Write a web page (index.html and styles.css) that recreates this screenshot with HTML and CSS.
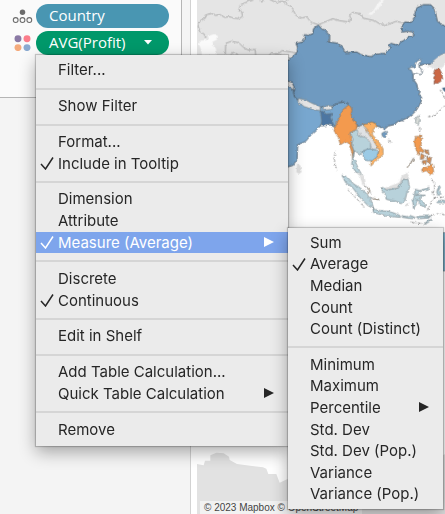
FILE: index.html
```
<!DOCTYPE html>
<html lang="en">
<head>
<meta charset="utf-8">
<title>Profit by Country</title>
<link rel="stylesheet" href="styles.css">
</head>
<body>
<div class="workspace">
  <aside class="sidebar">
    <section class="marks">
      <div class="mark">
        <svg class="mark-icon" viewBox="0 0 20 14" aria-hidden="true">
          <circle cx="10" cy="3" r="2.6" fill="#6b6b6b"/>
          <g fill="none" stroke="#6b6b6b" stroke-width="1"><circle cx="3.500" cy="10.500" r="2.300"/><circle cx="10" cy="10.500" r="2.300"/><circle cx="16.500" cy="10.500" r="2.300"/></g>
        </svg>
        <button class="pill pill-dimension" type="button">Country</button>
      </div>
      <div class="mark">
        <svg class="mark-icon" viewBox="0 0 20 16" aria-hidden="true">
          <circle cx="5.700" cy="3.500" r="3.300" fill="#8a79a4"/><circle cx="14.300" cy="3.500" r="3.300" fill="#fb7d8b"/>
          <circle cx="5.700" cy="12" r="3.300" fill="#f4aa7c"/><circle cx="14.300" cy="12" r="3.300" fill="#8aaad0"/>
        </svg>
        <div class="pill-anchor">
          <button class="pill pill-measure" type="button" aria-haspopup="menu" aria-expanded="true">AVG(Profit)
            <svg class="caret" viewBox="0 0 8 5" aria-hidden="true"><path d="M0 0H8L4 4.500Z"/></svg>
          </button>
          <ul class="menu" role="menu">
            <li><button type="button" role="menuitem">Filter...</button></li>
            <li class="rule" role="separator"></li>
            <li><button type="button" role="menuitem">Show Filter</button></li>
            <li class="rule" role="separator"></li>
            <li><button type="button" role="menuitem">Format...</button></li>
            <li><button type="button" role="menuitemcheckbox" aria-checked="true"><svg class="check" viewBox="0 0 28 28"><path d="M2 16 11 26 26 3"/></svg>Include in Tooltip</button></li>
            <li class="rule" role="separator"></li>
            <li><button type="button" role="menuitem">Dimension</button></li>
            <li><button type="button" role="menuitem">Attribute</button></li>
            <li class="parent">
              <button class="active" type="button" role="menuitem" aria-haspopup="menu" aria-expanded="true"><svg class="check" viewBox="0 0 28 28"><path d="M2 16 11 26 26 3"/></svg>Measure (Average)<svg class="arrow" viewBox="0 0 10 10"><path d="M0 0 10 5 0 10Z"/></svg></button>
              <ul class="menu submenu" role="menu">
                <li><button type="button" role="menuitem">Sum</button></li>
                <li><button type="button" role="menuitemradio" aria-checked="true"><svg class="check" viewBox="0 0 28 28"><path d="M2 16 11 26 26 3"/></svg>Average</button></li>
                <li><button type="button" role="menuitem">Median</button></li>
                <li><button type="button" role="menuitem">Count</button></li>
                <li><button type="button" role="menuitem">Count (Distinct)</button></li>
                <li class="rule" role="separator"></li>
                <li><button type="button" role="menuitem">Minimum</button></li>
                <li><button type="button" role="menuitem">Maximum</button></li>
                <li><button type="button" role="menuitem">Percentile<svg class="arrow" viewBox="0 0 10 10"><path d="M0 0 10 5 0 10Z"/></svg></button></li>
                <li><button type="button" role="menuitem">Std. Dev</button></li>
                <li><button type="button" role="menuitem">Std. Dev (Pop.)</button></li>
                <li><button type="button" role="menuitem">Variance</button></li>
                <li><button type="button" role="menuitem">Variance (Pop.)</button></li>
              </ul>
            </li>
            <li class="rule" role="separator"></li>
            <li><button type="button" role="menuitem">Discrete</button></li>
            <li><button type="button" role="menuitemcheckbox" aria-checked="true"><svg class="check" viewBox="0 0 28 28"><path d="M2 16 11 26 26 3"/></svg>Continuous</button></li>
            <li class="rule" role="separator"></li>
            <li><button type="button" role="menuitem">Edit in Shelf</button></li>
            <li class="rule" role="separator"></li>
            <li><button type="button" role="menuitem">Add Table Calculation...</button></li>
            <li><button type="button" role="menuitem">Quick Table Calculation<svg class="arrow" viewBox="0 0 10 10"><path d="M0 0 10 5 0 10Z"/></svg></button></li>
            <li class="rule" role="separator"></li>
            <li><button type="button" role="menuitem">Remove</button></li>
          </ul>
        </div>
      </div>
    </section>
  </aside>
  <main class="map">
    <svg class="map-art" viewBox="0 0 744 1542" preserveAspectRatio="xMinYMin slice" aria-hidden="true">
      <!-- roughens the straight segments into coastlines -->
      <filter id="coast" filterUnits="userSpaceOnUse" x="-30" y="-30" width="900" height="900" color-interpolation-filters="sRGB">
        <feTurbulence type="fractalNoise" baseFrequency="0.1" numOctaves="2" seed="4" result="noise"/>
        <feDisplacementMap in="SourceGraphic" in2="noise" scale="9" xChannelSelector="R" yChannelSelector="G"/>
      </filter>
      <g filter="url(#coast)">
      <!-- northern land and its borders -->
      <g transform="translate(-21 0)">
        <path fill="#e5e5e5" d="M-10 -20H790V150L750 165 730 182 722 190 735 205 700 196 400 330 -10 330Z"/>
        <path fill="#fafafa" d="M60 106 72 102 84 108 82 118 66 126 68 136 78 146 80 165H36L32 145 26 132 32 122 50 120Z"/>
        <path fill="#f5f5f5" d="M532 42 550 32 562 12 572 0H583L574 16 556 34 545 45Z"/>
        <g fill="none" stroke="#acacac" stroke-width="3">
          <path d="M48 112 40 100 30 95 24 78 30 62 45 55 50 44 64 40 76 46 90 44 104 52 118 50 130 54 148 56 158 48 154 34 146 32 152 14 166 8 190 0M212 3 222 0M240 0 262 8 272 4 285 6 292 0M285 10 302 18 318 46 336 54 350 50 362 66 385 74 400 68 428 56 448 62 478 66 482 54 478 46 488 37 514 42 518 54 536 58 554 62 570 72 592 74 618 64 646 70 640 84"/>
          <path d="M106 165 107 130 124 124 146 128 160 142 174 150 195 148 197 165M122 165 130 156 144 164M238 165 244 158 264 162 276 152 304 156 320 160"/>
        </g>
      </g>
      <!-- India -->
      <path fill="#78a7cf" stroke="#586f82" stroke-width="3" d="M254 240 290 272 334 315 369 322 384 318 409 318 424 308 445 306 459 315 440 360 420 378 400 375 372 374 368 380 344 402 326 424 302 434 300 478 288 496 254 506Z"/>
      <!-- China -->
      <g transform="translate(-21 0)">
        <path fill="#6f9ac0" stroke="#52626f" stroke-width="3" d="M280 184 302 175 320 158 323 144 318 130 340 126 344 103 354 106 368 102 371 85 385 75 396 88 404 89 419 107 419 122 415 126 440 129 458 142 466 158 500 156 514 164 542 170 560 162 585 160 600 146 598 134 603 130 625 136 632 126 648 118 658 108 672 107 669 96 655 94 636 96 636 78 644 66 665 67 676 50 674 38 680 24 700 14 722 14 734 26 742 64 756 74 785 84V152L750 166 743 174 730 182 724 192 697 194 684 198 693 206 690 214 697 218 691 224 679 220 669 223 669 236 680 252 683 266 690 276 686 284 695 292 693 305 685 320 678 332 666 344 652 353 635 362 622 365 615 373 595 378 583 388 575 382 560 378 557 370 543 366 533 372 517 375 500 380 490 360 480 345 478 316 465 306 445 308 430 318 405 320 390 322 355 318 325 302 313 290 310 272 312 260 305 246 280 240Z"/>
        <path fill="#fff" stroke="#52626f" stroke-width="2" d="M654 207 662 202 672 202 680 184 690 179 694 183 686 195 688 204 698 210 697 218 690 224 678 220 668 222 664 210Z"/>
        <path fill="#e2e2e2" d="M785 150 750 166 730 182 722 194 735 205 757 203 770 190Z"/>
        <path fill="#cb6745" stroke="#755044" stroke-width="2" d="M736 209 748 206 755 220 758 238 750 246 738 250 732 252 735 234 730 222Z"/>
        <path fill="#4f718f" d="M775 260 756 264 762 274 775 276Z"/>
      </g>
      <!-- South and Southeast Asia -->
      <g transform="translate(264 270)" stroke="#6e7b82" stroke-width="2" stroke-linejoin="round">
        <path fill="#e4e4e4" d="M40 25 62 30 82 40 105 49 106 62 86 59 58 50 38 36ZM117 48 140 48 142 58 120 60 113 56Z"/>
        <path fill="#4c76a2" d="M106 62 118 66 122 72 142 70 136 82 146 104 150 112 142 109 134 100 124 107 108 108 110 92Z"/>
        <path fill="#f39a4e" stroke="#94704d" d="M192 44 201 58 198 74 205 88 216 106 214 118 194 128 200 150 198 164 206 182 204 208 201 188 190 158 180 156 166 164 160 142 147 122 154 102 164 82 172 60Z"/>
        <path fill="#b8d2db" d="M196 128 216 120 224 140 246 138 258 156 256 176 232 184 228 194 208 182 206 204 220 236 229 252 212 246 200 224 206 182 200 162 204 148Z"/>
        <path fill="#e0e2e4" stroke="#969b9e" d="M218 116 229 106 238 112 246 120 250 134 270 152 278 176 262 178 256 160 246 144 228 138Z"/>
        <path fill="#fbb164" stroke="#9c7a51" d="M232 103 246 102 260 96 272 101 276 110 264 118 262 134 280 154 294 176 294 194 276 210 258 228 258 212 276 202 282 180 266 152 252 130 244 114Z"/>
        <path fill="#9bcae5" d="M232 184 250 176 272 180 280 184 276 200 262 212 244 212 236 202Z"/>
        <path fill="#6f9ac0" d="M290 130 300 124 308 126 302 140 292 142Z"/>
        <path fill="#d9ddda" d="M402 76 405 88 399 106 391 98 392 84Z"/>
        <path fill="#f39a4e" stroke="#94704d" d="M392 140 410 138 409 160 404 174 416 180 414 188 404 182 401 196 390 170 388 154ZM424 232 442 222 446 246 438 255 424 242 412 246 410 238Z"/>
        <path fill="#d98f54" stroke="#787066" d="M408 190 418 196 416 206 406 208ZM418 182 430 180 432 192 422 190ZM425 198 439 204 435 224 428 216ZM412 212 424 211 422 224 414 222Z"/>
        <path fill="#dfdfdf" stroke="none" d="M220 246 238 258 244 290 232 282ZM298 294 342 278 350 258 366 248 374 262 364 272 358 288 332 298 300 300ZM37 222 46 226 50 246 42 252 34 246Z"/>
        <path fill="#b8d2db" d="M171 256 190 264 206 282 226 294 244 310 258 330 266 356 248 346 228 326 202 292 182 278Z"/>
        <path fill="#b8d2db" d="M292 292 305 300 340 294 354 268 369 268 374 294 366 306 360 332 348 341 332 334 304 328 300 312 291 302Z"/>
        <path fill="#b8d2db" d="M264 356 284 362 314 364 344 376 346 382 304 378 266 368Z"/>
        <path fill="#b8d2db" d="M390 298 404 302 432 292 430 300 400 306 392 316 410 314 418 316 402 324 420 342 421 352 408 346 396 328 392 344 386 356 383 334 388 318ZM462 286 466 292 460 302 468 310 460 318 455 306Z"/>
        <path fill="#b8d2db" d="M350 377 366 380 374 376 390 382 382 386 352 382ZM394 380 416 378 438 378 430 384 400 386ZM428 392 440 388 430 397 418 402ZM456 334 470 330 490 334 490 338 456 338Z"/>
        <g fill="none" stroke="#656565" stroke-width="3" stroke-dasharray="6 4 3 6">
          <path d="M151 184 147 202 150 222 156 240M190 300 206 318 224 334 238 352M240 288 256 306 258 324 284 330M386 204 376 220 366 234M430 80 448 78 460 66 478 48M466 0 474 14 478 24M440 268 450 284 444 310 450 326M436 376 456 372 478 374M404 112 406 132M310 150 320 160M380 398 410 400M364 346 372 338M428 360 432 350 446 326 478 320"/>
        </g>
        <path fill="none" stroke="#7c6e5d" stroke-width="3" d="M385 207 378 218 366 233M262 326 280 328M246 292 254 300 248 312"/>
      </g>
      </g>
      <!-- Australia and Antarctica -->
      <path fill="#7caec6" stroke="#7b8890" stroke-width="2" d="M736 698H750V813H736Z"/>
      <path fill="#e2e2e2" d="M0 1392 20 1396 24 1382 40 1382 40 1366 58 1358 80 1360 96 1370 98 1380 120 1392 198 1402 208 1406 214 1422 238 1422 248 1448 270 1438 400 1430 736 1430 738 1365 750 1360V1542H0Z"/>
    </svg>
    <p class="credit">© 2023 Mapbox © OpenStreetMap</p>
  </main>
</div>
</body>
</html>
```
FILE: styles.css
```
* { box-sizing: border-box; }

body {
  margin: 0;
  font-family: Inter, "Liberation Sans", sans-serif;
  color: #262626;
}

button {
  font: inherit;
  color: inherit;
  border: 0;
  background: none;
  text-align: left;
}

ul, p { margin: 0; padding: 0; list-style: none; }

.workspace {
  display: flex;
  min-height: 100vh;
  overflow: hidden;
  background: #f4f4f4;
}

.sidebar {
  flex: 0 0 191px;
  padding-right: 8px;
  border-right: 1px solid #d2d2d2;
}

.marks {
  display: flex;
  flex-direction: column;
  gap: 3px;
  height: 98px;
  padding: 4px 12px 0;
  background: #fafafa;
  border: solid #b5b5b5;
  border-width: 0 1px 1px 0;
}

.mark {
  display: flex;
  align-items: center;
  gap: 3px;
}

.mark-icon { flex: 0 0 21px; width: 21px; }

.pill-anchor { position: relative; }

.pill {
  display: flex;
  align-items: center;
  justify-content: space-between;
  width: 133px;
  height: 24px;
  padding: 0 17px 2px 13px;
  border-radius: 12px;
  color: #fff;
  font-family: "Open Sans", sans-serif;
  font-size: 15px;
}

.pill-dimension { background: #4996b2; }
.pill-measure { background: #00986a; }
.caret { width: 8px; fill: #fff; }

.menu {
  position: absolute;
  z-index: 2;
  top: 100%;
  left: 0;
  display: flex;
  flex-direction: column;
  width: 252px;
  min-height: 391px;
  padding: 4px 0 6px;
  background: #ebebeb;
  box-shadow: 0 0 1px 1px #0003, 0 6px 16px #0005;
  font-size: 15px;
  white-space: nowrap;
}

.menu > li { display: flex; flex: 1 0 21px; }

.menu > .rule {
  flex: 0 0 14px;
  padding: 7px 0 5px;
  background: #d5d5d5 content-box;
}

.menu button {
  position: relative;
  display: flex;
  flex: 1;
  align-items: center;
  justify-content: space-between;
  padding: 0 14px 0 22px;
}

.menu .active { background: #7ea5ec; color: #fff; }

.check {
  position: absolute;
  left: 4px;
  width: 14px;
  fill: none;
  stroke: currentColor;
  stroke-width: 3;
}

.arrow { width: 10px; fill: currentColor; }

.parent { position: relative; }

.menu.submenu {
  top: -4px;
  left: 100%;
  width: 155px;
  min-height: 281px;
  padding: 4px 0;
}

.map {
  position: relative;
  flex: 1;
  border-left: 6px solid #fff;
  background: #fff;
}

.map-art {
  position: absolute;
  width: 100%;
  height: 100%;
}

.credit {
  position: absolute;
  bottom: 0;
  left: 3px;
  padding: 0 4px;
  background: #f2f2f2;
  color: #444;
  font: 10px/13px "Liberation Sans", sans-serif;
  white-space: nowrap;
}
```
